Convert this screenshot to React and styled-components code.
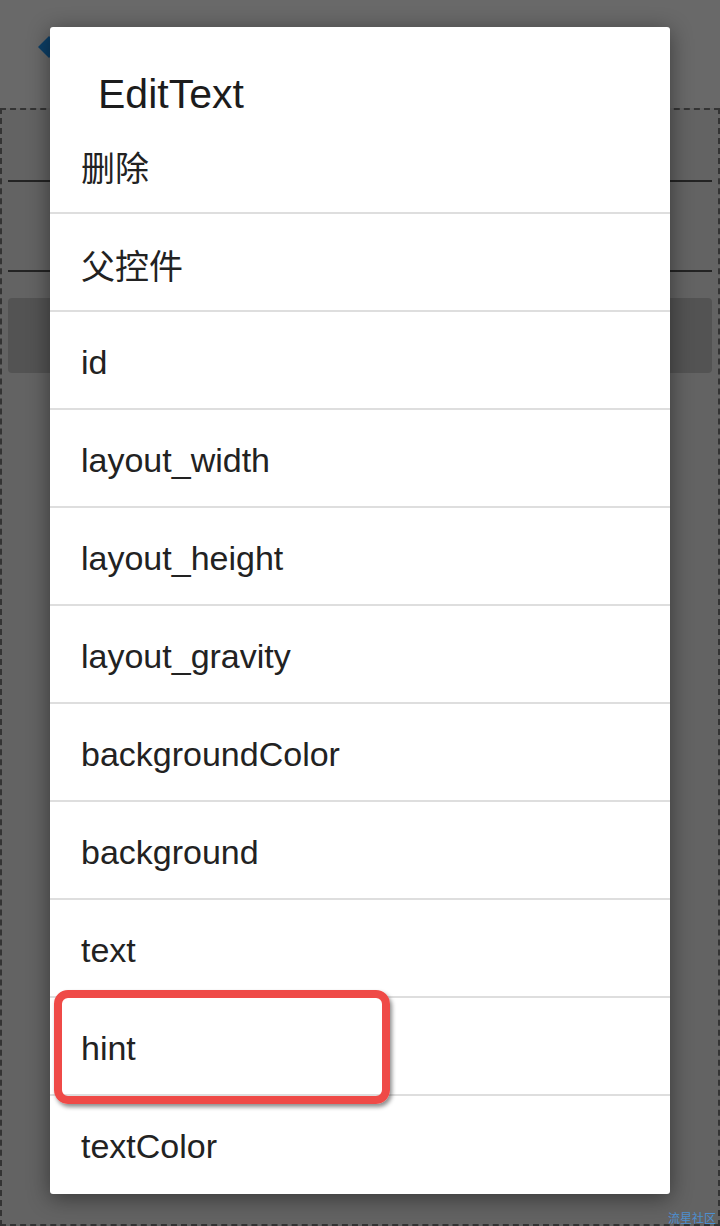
import React from "react";
import styled, { createGlobalStyle } from "styled-components";

const GlobalStyle = createGlobalStyle`
  html, body {
    margin: 0;
    padding: 0;
    width: 720px;
    height: 1226px;
    overflow: hidden;
    font-family: "Liberation Sans", "Noto Sans CJK SC", sans-serif;
  }
`;

const attributes = [
  "删除",
  "父控件",
  "id",
  "layout_width",
  "layout_height",
  "layout_gravity",
  "backgroundColor",
  "background",
  "text",
  "hint",
  "textColor",
];

function App() {
  return (
    <Screen>
      <GlobalStyle />
      <AppBar>
        <BackIcon viewBox="0 0 20 20">
          <polygon points="10,0 20,10 10,20 0,10" fill="#2196f3" />
        </BackIcon>
      </AppBar>
      <Canvas>
        <Field />
        <Field />
        <Block />
      </Canvas>

      <Scrim>
        <Dialog>
          <Title>EditText</Title>
          <List>
            {attributes.map((name) => (
              <Item key={name}>{name}</Item>
            ))}
          </List>
        </Dialog>
      </Scrim>

      {/* annotation drawn over the screenshot */}
      <Highlight />
      <Watermark>流星社区</Watermark>
    </Screen>
  );
}

export default App;

const Screen = styled.div`
  position: relative;
  width: 720px;
  height: 1226px;
  display: flex;
  flex-direction: column;
  background: #f2f2f2;
  overflow: hidden;
`;

const AppBar = styled.div`
  height: 108px;
  flex-shrink: 0;
  display: flex;
  align-items: center;
  padding-left: 38px;
  background: #fafafa;
`;

const BackIcon = styled.svg`
  width: 22px;
  height: 22px;
  margin-top: -14px;
`;

const Canvas = styled.div`
  flex: 1;
  display: flex;
  flex-direction: column;
  gap: 18px;
  padding: 0 6px;
  border: 2px dashed #7a7a7a;
  background: #ededed;
`;

const Field = styled.div`
  height: 70px;
  border-bottom: 2px solid #555;
`;

const Block = styled.div`
  height: 75px;
  margin-top: 8px;
  border-radius: 4px;
  background: #c6c6c6;
`;

const Scrim = styled.div`
  position: absolute;
  inset: 0;
  display: flex;
  justify-content: center;
  align-items: flex-start;
  padding-top: 27px;
  background: rgba(0, 0, 0, 0.58);
`;

const Dialog = styled.div`
  width: 620px;
  display: flex;
  flex-direction: column;
  background: #fff;
  border-radius: 3px;
  box-shadow: 0 4px 22px rgba(0, 0, 0, 0.45);
`;

const Title = styled.div`
  height: 42px;
  padding: 47px 0 0 48px;
  font-size: 41px;
  line-height: 40px;
  color: #1c1c1c;
`;

const List = styled.div`
  display: flex;
  flex-direction: column;
`;

const Item = styled.div`
  height: 98px;
  display: flex;
  align-items: center;
  padding: 4px 0 0 31px;
  box-sizing: border-box;
  border-bottom: 2px solid #dedede;
  font-size: 34px;
  color: #222;

  &:last-child {
    border-bottom-color: transparent;
  }
`;

const Highlight = styled.div`
  position: absolute;
  left: 54px;
  top: 990px;
  width: 336px;
  height: 114px;
  box-sizing: border-box;
  border: 8px solid #ef4a47;
  border-radius: 14px;
  box-shadow: 2px 3px 4px rgba(0, 0, 0, 0.45);
`;

const Watermark = styled.div`
  position: absolute;
  left: 668px;
  top: 1211px;
  font-size: 12px;
  line-height: 14px;
  white-space: nowrap;
  color: #4d8fd0;
  font-family: "Noto Sans CJK SC", sans-serif;
`;
